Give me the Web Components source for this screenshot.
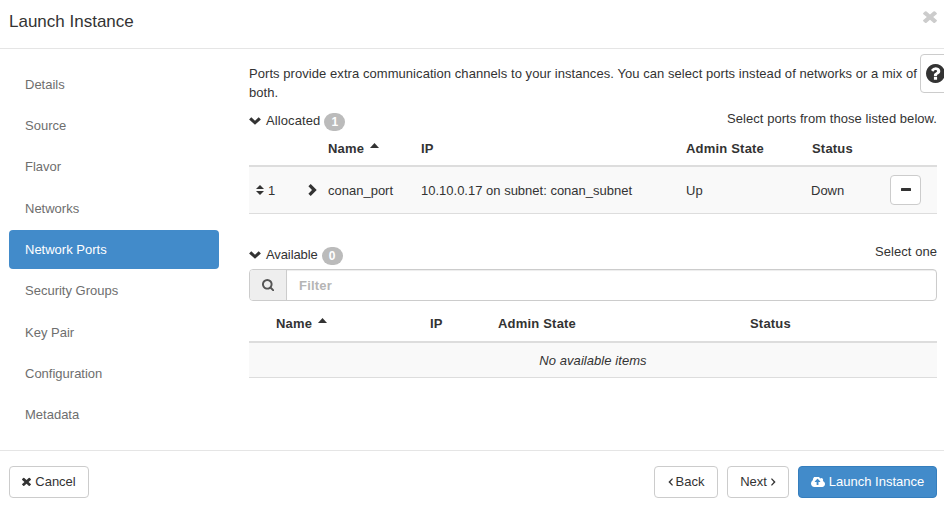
<!DOCTYPE html>
<html lang="en">
<head>
<meta charset="utf-8">
<title>Launch Instance</title>
<style>
body { margin: 0; background: #fff; overflow: hidden; font: 13px/19px "Liberation Sans", Arial, sans-serif; color: #333; letter-spacing: 0; }
</style>
</head>
<body>
<launch-modal></launch-modal>
<script>
const define = (name, html, setup) => customElements.define(name, class extends HTMLElement {
  connectedCallback() {
    if (this.shadowRoot) return;
    this.attachShadow({ mode: "open" }).innerHTML = html;
    if (setup) setup(this, this.shadowRoot);
  }
});

const icons = {
  times: ["300 238 1192 1320", "M1490 1322q0 40-28 68l-136 136q-28 28-68 28t-68-28l-294-294-294 294q-28 28-68 28t-68-28l-136-136q-28-28-28-68t28-68l294-294-294-294q-28-28-28-68t28-68l136-136q28-28 68-28t68 28l294 294 294-294q28-28 68-28t68 28l136 136q28 28 28 68t-28 68l-294 294 294 294q28 28 28 68z"],
  down: ["0 0 12 8", "M6 7.800L.1 2.500 2.300.2 6 3.700 9.700.2 11.900 2.500z"],
  right: ["0 0 9 12", "M2.700 0L8.700 6 2.700 12 .4 9.700 4 6 .4 2.300z"],
  up: ["0 0 9 4.500", "M0 4.500L4.500 0 9 4.500z"],
  sort: ["0 0 8 10", "M0 4L4 0 8 4zM0 6h8L4 10z"],
  minus: ["0 0 10 3", "M.6 0h8.800q.6 0 .6.6v1.800q0 .6-.6.6H.6Q0 3 0 2.400V.6Q0 0 .6 0z"],
  left: ["0 0 5 8", "M4.100.2L5 1.100 2.300 4 5 6.900 4.100 7.800.4 4z"],
  next: ["0 0 5 8", "M.9.2L0 1.100 2.700 4 0 6.900.9 7.800 4.600 4z"],
  search: ["64 128 1664 1664", "M1216 832q0-185-131.500-316.500t-316.500-131.500-316.500 131.500-131.500 316.500 131.500 316.500 316.500 131.500 316.500-131.500 131.500-316.500zm512 832q0 52-38 90t-90 38q-54 0-90-38l-343-342q-179 124-399 124-143 0-273.500-55.500t-225-150-150-225-55.500-273.500 55.500-273.500 150-225 225-150 273.500-55.500 273.500 55.500 225 150 150 225 55.500 273.500q0 220-124 399l343 343q37 37 37 90z"],
  help: ["128 128 1536 1536", "M1024 1376v-192q0-14-9-23t-23-9h-192q-14 0-23 9t-9 23v192q0 14 9 23t23 9h192q14 0 23-9t9-23zm256-672q0-88-55.500-163t-138.500-116-170-41q-243 0-371 213-15 24 8 42l132 100q7 6 19 6 16 0 25-12 53-68 86-92 34-24 86-24 48 0 85.500 26t37.500 59q0 38-20 61t-68 45q-63 28-115.500 86.500t-52.500 125.500v36q0 14 9 23t23 9h192q14 0 23-9t9-23q0-19 21.500-49.500t54.500-49.500q32-18 49-28.500t46-35 44.500-48 28-60.500 12.500-81zm384 192q0 209-103 385.500t-279.500 279.500-385.500 103-385.500-103-279.500-279.500-103-385.500 103-385.500 279.500-279.500 385.500-103 385.500 103 279.500 279.500 103 385.500z"],
  cloud: ["64 256 1920 1280", "M1344 864q0-14-9-23l-352-352q-9-9-23-9t-23 9l-351 351q-10 12-10 24 0 14 9 23t23 9h224v352q0 13 9.500 22.500t22.500 9.500h192q13 0 22.500-9.500t9.500-22.500v-352h224q13 0 22.500-9.500t9.500-22.500zm640 288q0 159-112.500 271.500t-271.500 112.500h-1088q-185 0-316.500-131.500t-131.500-316.500q0-130 70-240t188-165q-2-30-2-43 0-212 150-362t362-150q156 0 285.500 87t188.500 231q71-62 166-62 106 0 181 75t75 181q0 76-41 138 130 31 213.500 135.500t83.500 238.500z"]
};

define("ui-icon", `<style>:host{display:inline-block;flex:none}svg{display:block;width:100%;height:100%;fill:currentColor}</style>
<svg preserveAspectRatio="none"><path/></svg>`, (el, root) => {
  const [box, d] = icons[el.getAttribute("name")];
  root.querySelector("svg").setAttribute("viewBox", box);
  root.querySelector("path").setAttribute("d", d);
  el.style.width = el.getAttribute("w") + "px";
  el.style.height = el.getAttribute("h") + "px";
});

define("step-item", `<style>
:host{display:block;height:39px;line-height:39px;padding-left:16px;border-radius:4px;color:#6e6e6e}
:host([active]){background:#428bca;color:#fff}
span{display:block;margin-top:-.2px}
</style><span><slot></slot></span>`);

define("ui-button", `<style>
:host{display:flex;box-sizing:border-box;height:32px;align-items:center;justify-content:center;border:1px solid #ccc;border-radius:4px;background:#fff;white-space:nowrap}
:host([primary]){background:#428bca;border-color:#357ebd;color:#fff}
:host([action]){padding-bottom:1px}
</style><slot></slot>`);

define("count-badge", `<style>
:host{display:block;box-sizing:border-box;width:21px;height:18px;border-radius:9px;background:#bbb;color:#fff;font-weight:bold;font-size:12px;line-height:18px;text-align:center}
</style><slot></slot>`);

define("section-head", `<style>
:host{display:flex;height:22px;justify-content:space-between}
.l{display:flex;align-items:center;height:22px}
.t{margin:-2px 4px 0 5px;letter-spacing:var(--ls,0)}
count-badge{margin-top:1px}
.r{line-height:var(--hint,18px);letter-spacing:.05px}
</style><div class="l"><ui-icon name="down" w="12" h="8"></ui-icon><span class="t"><slot></slot></span><count-badge></count-badge></div><div class="r"><slot name="hint"></slot></div>`,
(el, root) => { root.querySelector("count-badge").textContent = el.getAttribute("count"); });

define("table-row", `<style>
:host{display:grid;grid-template-columns:var(--cols);align-items:center;box-sizing:border-box;background:#f9f9f9;border-bottom:1px solid #ddd}
:host([head]){background:none;border-bottom:2px solid #ddd;font-weight:bold;letter-spacing:.2px}
</style><slot></slot>`);

define("filter-box", `<style>
:host{display:flex;box-sizing:border-box;height:32px;border:1px solid #ccc;border-radius:4px;overflow:hidden}
.a{display:flex;width:36px;align-items:center;justify-content:center;background:#eee;border-right:1px solid #ccc;color:#555}
.f{flex:1;padding-left:12px;line-height:31px;color:#b5b5b5;font-weight:bold;letter-spacing:.2px;box-shadow:inset 0 1px 1px rgba(0,0,0,.075)}
</style><div class="a"><ui-icon name="search" w="12.5" h="12.5"></ui-icon></div><div class="f"><slot></slot></div>`);

define("launch-modal", `<style>
:host{display:flex;flex-direction:column;position:relative;width:944px;height:507px;overflow:hidden}
header{display:flex;box-sizing:border-box;height:49px;padding:0 7px 0 9px;justify-content:space-between;border-bottom:1px solid #e5e5e5}
h1{margin:0;font-size:17px;font-weight:normal;line-height:44px}
header ui-icon{margin-top:10px;color:#ccc}
main{display:flex;height:401px}
nav{display:flex;flex-direction:column;gap:2.330px;width:210px;margin:15.800px 30px 0 9px}
.c{width:688px}
p{margin:15px -6px 8px 0;white-space:nowrap;letter-spacing:.06px}
.alloc{--cols:19px 40px 20px 93px 265px 125px 79px 1fr;--ls:.1px}
.avail{--cols:27px 154px 68px 252px 1fr;--ls:-.1px;--hint:16px;margin-top:30px}
.alloc table-row[head]{height:35px}
.alloc table-row{height:47px}
.avail table-row[head]{height:42px;padding-top:4px}
.avail table-row{height:35px}
filter-box{margin-top:3px}
.n{display:flex;gap:6px}
.n ui-icon{margin-top:4px}
.s{padding-left:7px}
.last{padding-left:1px}
.b{width:31px;height:30px;padding-bottom:1px}
.none{grid-column:1/-1;text-align:center;font-style:italic;letter-spacing:.06px}
footer{display:flex;align-items:flex-start;box-sizing:border-box;height:57px;padding:15px 7px 0 9px;border-top:1px solid #e5e5e5}
.help{position:absolute;left:920px;top:54px;width:40px;height:39px;justify-content:flex-start;padding-left:5px}
</style>
<header><h1>Launch Instance</h1><ui-icon name="times" w="14" h="13"></ui-icon></header>
<main>
<nav><step-item>Details</step-item><step-item>Source</step-item><step-item>Flavor</step-item><step-item>Networks</step-item><step-item active>Network Ports</step-item><step-item>Security Groups</step-item><step-item>Key Pair</step-item><step-item>Configuration</step-item><step-item>Metadata</step-item></nav>
<div class="c">
<p>Ports provide extra communication channels to your instances. You can select ports instead of networks or a mix of<br>both.</p>
<section class="alloc">
<section-head count="1">Allocated<span slot="hint">Select ports from those listed below.</span></section-head>
<table-row head><span></span><span></span><span></span><span class="n">Name<ui-icon name="up" w="9" h="5"></ui-icon></span><span>IP</span><span>Admin State</span><span class="last">Status</span></table-row>
<table-row><ui-icon class="s" name="sort" w="8" h="10"></ui-icon><span>1</span><ui-icon name="right" w="9" h="12"></ui-icon><span>conan_port</span><span>10.10.0.17 on subnet: conan_subnet</span><span>Up</span><span>Down</span><ui-button class="b"><ui-icon name="minus" w="10" h="3"></ui-icon></ui-button></table-row>
</section>
<section class="avail">
<section-head count="0">Available<span slot="hint">Select one</span></section-head>
<filter-box>Filter</filter-box>
<table-row head><span></span><span class="n">Name<ui-icon name="up" w="9" h="5"></ui-icon></span><span>IP</span><span>Admin State</span><span>Status</span></table-row>
<table-row><span class="none">No available items</span></table-row>
</section>
</div>
</main>
<footer>
<ui-button action style="width:80px;gap:4px"><ui-icon name="times" w="9" h="9"></ui-icon>Cancel</ui-button>
<ui-button action style="width:64px;gap:3px;margin-left:auto"><ui-icon name="left" w="5" h="8"></ui-icon>Back</ui-button>
<ui-button action style="width:62px;gap:4px;margin-left:9px">Next<ui-icon name="next" w="5" h="8"></ui-icon></ui-button>
<ui-button action primary style="width:139px;gap:4px;margin-left:9px"><ui-icon name="cloud" w="14" h="10"></ui-icon>Launch Instance</ui-button>
</footer>
<ui-button class="help"><ui-icon name="help" w="19" h="19"></ui-icon></ui-button>`);
</script>
</body>
</html>
